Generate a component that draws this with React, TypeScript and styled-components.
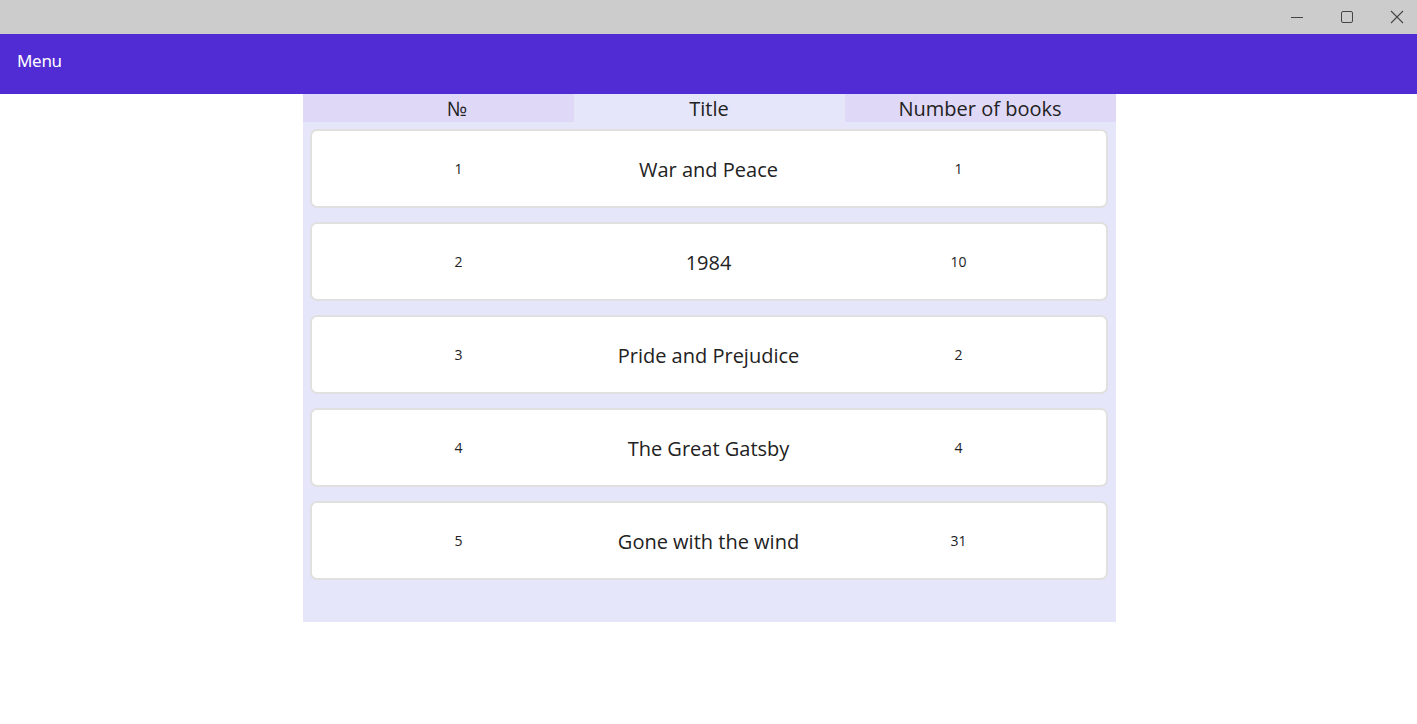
import React from "react";
import styled, { createGlobalStyle } from "styled-components";

const Global = createGlobalStyle`
  html, body { margin: 0; padding: 0; background: #ffffff; }
  body { font-family: "Open Sans", "Noto Sans", sans-serif; }
`;

const Window = styled.div`
  width: 1417px;
  height: 724px;
  display: flex;
  flex-direction: column;
  background: #ffffff;
  overflow: hidden;
`;

const TitleBar = styled.div`
  height: 34px;
  background: #cccccc;
  display: flex;
  justify-content: flex-end;
  align-items: stretch;
  margin-right: -5px;
`;

const CaptionButton = styled.div`
  width: 50px;
  display: flex;
  align-items: center;
  justify-content: center;
  color: #444;
`;

const MenuBar = styled.div`
  height: 60px;
  background: #512bd4;
  display: flex;
  align-items: center;
  padding-left: 17px;
`;

const MenuLabel = styled.span`
  color: #ffffff;
  font-family: "Noto Sans", "Open Sans", sans-serif;
  font-size: 17px;
  letter-spacing: -0.3px;
  margin-top: -7px;
`;

const Content = styled.div`
  flex: 1;
  display: flex;
  justify-content: center;
`;

const Panel = styled.div`
  width: 813px;
  height: 528px;
  background: #e6e6fa;
  display: flex;
  flex-direction: column;
  margin-left: 1px;
`;

const HeaderRow = styled.div`
  display: grid;
  grid-template-columns: 271px 271px 271px;
  height: 28px;
`;

const HeaderCell = styled.div<{ $shaded?: boolean; $shift?: number }>`
  background: ${(p) => (p.$shaded ? "#dfd8f7" : "transparent")};
  display: flex;
  align-items: center;
  justify-content: center;
  font-size: 20px;
  color: #222;
  line-height: 1;
  padding-top: 1px;
  padding-left: ${(p) => (p.$shift ? `${p.$shift}px` : "0")};
`;

const List = styled.div`
  display: flex;
  flex-direction: column;
  padding: 7px 8px 0 7px;
  gap: 14px;
`;

const Card = styled.div`
  height: 75px;
  background: #ffffff;
  border: 2px solid #e0e0e0;
  border-radius: 7px;
  display: grid;
  grid-template-columns: 1fr 1fr 1fr;
  align-items: center;
  padding: 0 22px;
`;

const Cell = styled.div<{ $big?: boolean }>`
  text-align: center;
  font-size: ${(p) => (p.$big ? "20px" : "14px")};
  color: #222;
  margin-top: ${(p) => (p.$big ? "2px" : "-1px")};
`;

const books = [
  { n: 1, title: "War and Peace", count: 1 },
  { n: 2, title: "1984", count: 10 },
  { n: 3, title: "Pride and Prejudice", count: 2 },
  { n: 4, title: "The Great Gatsby", count: 4 },
  { n: 5, title: "Gone with the wind", count: 31 },
];

export default function App() {
  return (
    <>
      <Global />
      <Window>
        <TitleBar>
          <CaptionButton>
            <svg width="12" height="12" viewBox="0 0 12 12">
              <path d="M0 6.5h12" stroke="#444" strokeWidth="1" />
            </svg>
          </CaptionButton>
          <CaptionButton>
            <svg width="12" height="12" viewBox="0 0 12 12">
              <rect x="0.5" y="0.5" width="11" height="11" rx="1.5" fill="none" stroke="#444" strokeWidth="1" />
            </svg>
          </CaptionButton>
          <CaptionButton>
            <svg width="14" height="14" viewBox="0 0 14 14">
              <path d="M1 1l12 12M13 1L1 13" stroke="#444" strokeWidth="1.1" />
            </svg>
          </CaptionButton>
        </TitleBar>
        <MenuBar>
          <MenuLabel>Menu</MenuLabel>
        </MenuBar>
        <Content>
          <Panel>
            <HeaderRow>
              <HeaderCell $shaded $shift={38}>№</HeaderCell>
              <HeaderCell>Title</HeaderCell>
              <HeaderCell $shaded>Number of books</HeaderCell>
            </HeaderRow>
            <List>
              {books.map((b) => (
                <Card key={b.n}>
                  <Cell>{b.n}</Cell>
                  <Cell $big>{b.title}</Cell>
                  <Cell>{b.count}</Cell>
                </Card>
              ))}
            </List>
          </Panel>
        </Content>
      </Window>
    </>
  );
}
